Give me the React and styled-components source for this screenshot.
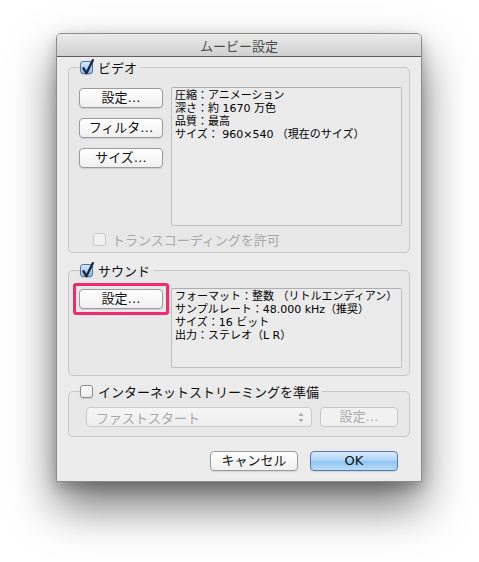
import React from 'react';
import styled, { createGlobalStyle } from 'styled-components';

const GlobalStyle = createGlobalStyle`
  html, body {
    margin: 0;
    padding: 0;
    background: #ffffff;
  }
  body {
    font-family: "DejaVu Sans", "Noto Sans CJK JP", sans-serif;
  }
`;

const Page = styled.div`
  width: 479px;
  height: 562px;
  box-sizing: border-box;
  padding: 33px 0 0 56px;
  overflow: hidden;
`;

const Window = styled.div`
  width: 366px;
  box-sizing: border-box;
  display: flex;
  flex-direction: column;
  background: #ececec;
  border: 1px solid #8c8c8c;
  border-radius: 5px 5px 0 0;
  box-shadow: 0 24px 46px rgba(0, 0, 0, 0.55), 0 6px 14px rgba(0, 0, 0, 0.22);
`;

const TitleBar = styled.div`
  height: 22px;
  display: flex;
  align-items: center;
  justify-content: center;
  border-bottom: 1px solid #5e5e5e;
  border-radius: 4px 4px 0 0;
  background: linear-gradient(#ebebeb, #d0d0d0);
  font-family: "Noto Sans CJK JP", sans-serif;
  font-size: 13px;
  color: #4b4b4b;
`;

const Content = styled.div`
  padding: 3px 11px 10px;
  display: flex;
  flex-direction: column;
`;

const Group = styled.fieldset`
  margin: ${({ $top }) => $top || 0}px 0 0;
  padding: 0;
  min-width: 0;
  border: 1px solid #c7c7c7;
  border-radius: 5px;
  background: #e8e8e8;
`;

const Legend = styled.legend`
  margin-left: 11px;
  padding: 0 3px 0 0;
  height: 15px;
  line-height: 15px;
`;

const LegendInner = styled.span`
  display: flex;
  align-items: center;
  height: 15px;
  gap: 5px;
  font-family: "Noto Sans CJK JP", sans-serif;
  font-size: 13px;
  line-height: 15px;
  color: #111;
`;

const GroupBody = styled.div`
  padding: ${({ $pad }) => $pad};
  display: flex;
  flex-direction: column;
`;

const Row = styled.div`
  display: flex;
  align-items: flex-start;
  gap: 8px;
`;

const ButtonColumn = styled.div`
  width: 84px;
  margin-top: 1px;
  display: flex;
  flex-direction: column;
  gap: 10px;
`;

const InfoBox = styled.div`
  flex: 1;
  height: ${({ $h }) => $h}px;
  box-sizing: border-box;
  padding: 1px 3px;
  border: 1px solid #c0c0c0;
  border-top-color: #aeaeae;
  border-radius: 2px;
  background: #ebebeb;
  font-size: 11px;
  line-height: 13px;
  color: #000;
`;

const CheckRow = styled.div`
  margin: 6px 0 0 14px;
  height: 15px;
  display: flex;
  align-items: center;
  gap: 6px;
  font-family: "Noto Sans CJK JP", sans-serif;
  font-size: 13px;
  color: #a9a9a9;
`;

const Box = styled.span`
  position: relative;
  width: 13px;
  height: 13px;
  flex-shrink: 0;
  box-sizing: border-box;
  border-radius: 3px;
  border: 1px solid ${({ $checked, $disabled }) =>
    $disabled ? '#cacaca' : $checked ? '#5675a3' : '#8c8c8c'};
  background: ${({ $checked, $disabled }) =>
    $disabled
      ? '#f1f1f1'
      : $checked
      ? 'linear-gradient(#d3e6f8, #92bfeb)'
      : 'linear-gradient(#ffffff, #ececec)'};
  box-shadow: ${({ $disabled }) => ($disabled ? 'none' : '0 1px 1px rgba(0,0,0,0.12)')};
`;

const Tick = styled.svg`
  position: absolute;
  left: 0;
  top: -4px;
  width: 14px;
  height: 17px;
  overflow: visible;
`;

const PushButton = styled.button`
  width: ${({ $w }) => $w}px;
  height: 20px;
  padding: 0;
  box-sizing: border-box;
  border-radius: 4px;
  font-family: "DejaVu Sans", "Noto Sans CJK JP", sans-serif;
  font-size: 13px;
  line-height: 18px;
  color: ${({ $disabled }) => ($disabled ? '#ababab' : '#111')};
  border: 1px solid ${({ $primary, $disabled }) =>
    $primary ? '#5a78ae' : $disabled ? '#c6c6c6' : '#9b9b9b'};
  background: ${({ $primary, $disabled }) =>
    $primary
      ? 'linear-gradient(#d9ecfc 0%, #acd2f6 48%, #8fc3f2 52%, #b9dcfa 100%)'
      : $disabled
      ? '#f1f1f1'
      : 'linear-gradient(#ffffff, #f0f0f0)'};
  box-shadow: ${({ $disabled }) => ($disabled ? 'none' : '0 1px 1px rgba(0,0,0,0.1)')};
`;

const Highlight = styled.div`
  position: relative;
  display: flex;
  &::after {
    content: '';
    position: absolute;
    inset: -6px;
    border: 3px solid #f22a72;
    border-radius: 3px;
    pointer-events: none;
  }
`;

const Popup = styled.div`
  width: 226px;
  height: 20px;
  box-sizing: border-box;
  padding: 0 7px 0 9px;
  display: flex;
  align-items: center;
  justify-content: space-between;
  border: 1px solid #cacaca;
  border-radius: 4px;
  background: linear-gradient(#f6f6f6, #eeeeee);
  font-family: "Noto Sans CJK JP", sans-serif;
  font-size: 13px;
  color: #a9a9a9;
`;

const StreamRow = styled.div`
  display: flex;
  gap: 8px;
`;

const Footer = styled.div`
  margin-top: 14px;
  padding-right: 12px;
  display: flex;
  justify-content: flex-end;
  gap: 12px;
`;

function Checkbox({ checked, disabled }) {
  return (
    <Box $checked={checked} $disabled={disabled}>
      {checked && (
        <Tick viewBox="0 0 14 17">
          <path
            d="M2.4 10.2 L5.4 15.2 L11.8 2.2"
            fill="none"
            stroke="#1b2943"
            strokeWidth="2.4"
            strokeLinecap="round"
            strokeLinejoin="round"
          />
        </Tick>
      )}
    </Box>
  );
}

function Arrows() {
  return (
    <svg width="6" height="11" viewBox="0 0 6 11">
      <path d="M3 0.5 L5.5 4 L0.5 4 Z" fill="#b0b0b0" />
      <path d="M3 10.5 L5.5 7 L0.5 7 Z" fill="#b0b0b0" />
    </svg>
  );
}

const videoInfo = [
  '圧縮：アニメーション',
  '深さ：約 1670 万色',
  '品質：最高',
  'サイズ： 960×540 （現在のサイズ）',
];

const soundInfo = [
  'フォーマット：整数 （リトルエンディアン）',
  'サンプルレート：48.000 kHz（推奨）',
  'サイズ：16 ビット',
  '出力：ステレオ（L R）',
];

export default function App() {
  return (
    <Page>
      <GlobalStyle />
      <Window>
        <TitleBar>ムービー設定</TitleBar>
        <Content>
          <Group>
            <Legend>
              <LegendInner>
                <Checkbox checked />
                ビデオ
              </LegendInner>
            </Legend>
            <GroupBody $pad="12px 7px 5px 10px">
              <Row>
                <ButtonColumn>
                  <PushButton $w={84}>設定…</PushButton>
                  <PushButton $w={84}>フィルタ…</PushButton>
                  <PushButton $w={84}>サイズ…</PushButton>
                </ButtonColumn>
                <InfoBox $h={139}>
                  {videoInfo.map((line) => (
                    <div key={line}>{line}</div>
                  ))}
                </InfoBox>
              </Row>
              <CheckRow>
                <Checkbox disabled />
                トランスコーディングを許可
              </CheckRow>
            </GroupBody>
          </Group>

          <Group $top={10}>
            <Legend>
              <LegendInner>
                <Checkbox checked />
                サウンド
              </LegendInner>
            </Legend>
            <GroupBody $pad="10px 7px 7px 10px">
              <Row>
                <ButtonColumn>
                  <Highlight>
                    <PushButton $w={84}>設定…</PushButton>
                  </Highlight>
                </ButtonColumn>
                <InfoBox $h={80}>
                  {soundInfo.map((line) => (
                    <div key={line}>{line}</div>
                  ))}
                </InfoBox>
              </Row>
            </GroupBody>
          </Group>

          <Group $top={8}>
            <Legend>
              <LegendInner>
                <Checkbox />
                インターネットストリーミングを準備
              </LegendInner>
            </Legend>
            <GroupBody $pad="8px 11px 9px 17px">
              <StreamRow>
                <Popup>
                  ファストスタート
                  <Arrows />
                </Popup>
                <PushButton $w={78} $disabled>
                  設定…
                </PushButton>
              </StreamRow>
            </GroupBody>
          </Group>

          <Footer>
            <PushButton $w={88}>キャンセル</PushButton>
            <PushButton $w={88} $primary>
              OK
            </PushButton>
          </Footer>
        </Content>
      </Window>
    </Page>
  );
}
